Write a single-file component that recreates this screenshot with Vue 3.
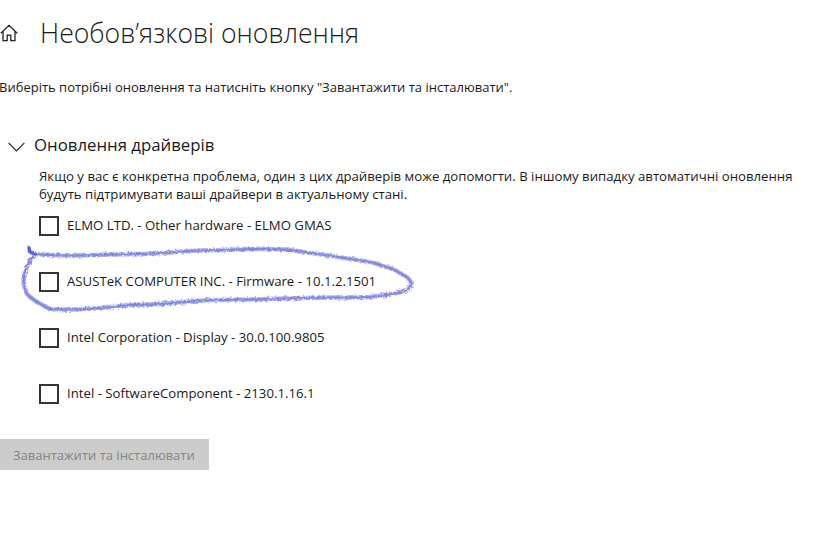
<template>
  <div class="page">
    <svg class="scribble" width="816" height="545" viewBox="0 0 816 545" fill="none">
      <defs>
        <filter id="rough" x="0" y="200" width="816" height="160" filterUnits="userSpaceOnUse">
          <feTurbulence type="fractalNoise" baseFrequency="0.4" numOctaves="2" seed="4" result="noise" />
          <feDisplacementMap in="SourceGraphic" in2="noise" scale="4" />
          <feGaussianBlur stdDeviation="0.3" />
        </filter>
      </defs>
      <g filter="url(#rough)" stroke-linecap="round" stroke-linejoin="round">
        <path :d="scribble" stroke="#a4a8e8" stroke-opacity="0.85" stroke-width="4.6" />
        <path :d="scribble" stroke="#5f66d6" stroke-opacity="0.6" stroke-width="2" />
        <path d="M29 248 L30 252 L35 254" stroke="#5a60d6" stroke-width="3.4" />
      </g>
    </svg>

    <header class="title-row">
      <svg class="home" width="18" height="18" viewBox="0 0 18 18" fill="none" stroke="#222" stroke-width="1.3">
        <path d="M0.8 9.2 9 1.4l8.2 7.8M3 7.4v9.2h4.2v-5.4h3.6v5.4H15V7.4" />
      </svg>
      <h1>Необов’язкові оновлення</h1>
    </header>

    <p class="intro">Виберіть потрібні оновлення та натисніть кнопку "Завантажити та інсталювати".</p>

    <div class="section-head">
      <svg class="chevron" width="17" height="10" viewBox="0 0 17 10" fill="none" stroke="#222" stroke-width="1.1">
        <path d="M0.6 0.8 8.5 9l7.9-8.2" />
      </svg>
      <h2>Оновлення драйверів</h2>
    </div>

    <div class="section-body">
      <p class="desc">Якщо у вас є конкретна проблема, один з цих драйверів може допомогти. В іншому випадку автоматичні оновлення будуть підтримувати ваші драйвери в актуальному стані.</p>
      <label v-for="item in drivers" :key="item" class="driver">
        <span class="box"></span>
        <span class="driver-name">{{ item }}</span>
      </label>
    </div>

    <button class="install" disabled>Завантажити та інсталювати</button>
  </div>
</template>

<script setup>
const drivers = [
  'ELMO LTD. - Other hardware - ELMO GMAS',
  'ASUSTeK COMPUTER INC. - Firmware - 10.1.2.1501',
  'Intel Corporation - Display - 30.0.100.9805',
  'Intel - SoftwareComponent - 2130.1.16.1',
]

// hand-drawn ring around the second driver
const scribble =
  'M35 254 C60 257 90 255 130 254 C160 255 180 250 220 250 C250 249 270 248 290 250 C320 254 345 258 370 262 C385 266 395 269 400 273 C408 277 412 281 411 285 C410 289 405 291 400 292 C390 295 380 296 370 297 C345 298 320 297 300 298 C270 299 240 300 210 300 C180 302 160 305 130 305 C105 308 75 311 50 309 C40 304 32 300 27 294 C24 288 23 282 24 277 C25 268 30 260 35 254'
</script>

<style>
html,
body {
  background: #fff;
}
</style>

<style scoped>
.page {
  position: relative;
  width: 816px;
  height: 545px;
  overflow: hidden;
  background: #fff;
  color: #1a1a1a;
  font-family: "Open Sans", "Noto Sans", sans-serif;
  font-size: 13px;
}

.scribble {
  position: absolute;
  left: 0;
  top: 0;
  pointer-events: none;
}

.title-row {
  display: flex;
  align-items: center;
  height: 34px;
  padding-top: 16px;
}

.home {
  margin-right: 22px;
}

h1 {
  margin: 0;
  font-size: 26.6px;
  font-weight: 300;
  white-space: nowrap;
}

.intro {
  margin: 28px 0 0 -1px;
  line-height: 18px;
  white-space: nowrap;
}

.section-head {
  display: flex;
  align-items: center;
  margin-top: 36px;
  padding-left: 8px;
  height: 24px;
}

.chevron {
  margin-top: 5px;
  margin-right: 9px;
}

h2 {
  margin: 0;
  font-size: 16.8px;
  font-weight: 400;
}

.section-body {
  padding-left: 39px;
  font-size: 13.2px;
}

.desc {
  margin: 11px 0 0;
  width: 770px;
  line-height: 18px;
}

.driver {
  display: flex;
  align-items: center;
  gap: 8px;
  height: 20px;
  margin-top: 36px;
}

.desc + .driver {
  margin-top: 13px;
}

.driver-name {
  margin-top: -2px;
}

.box {
  width: 16px;
  height: 16px;
  border: 2px solid #333;
}

.install {
  display: block;
  margin-top: 35px;
  width: 209px;
  height: 31px;
  border: 0;
  padding: 0 0 0 13px;
  background: #ccc;
  color: #858585;
  font: inherit;
  text-align: left;
}
</style>
